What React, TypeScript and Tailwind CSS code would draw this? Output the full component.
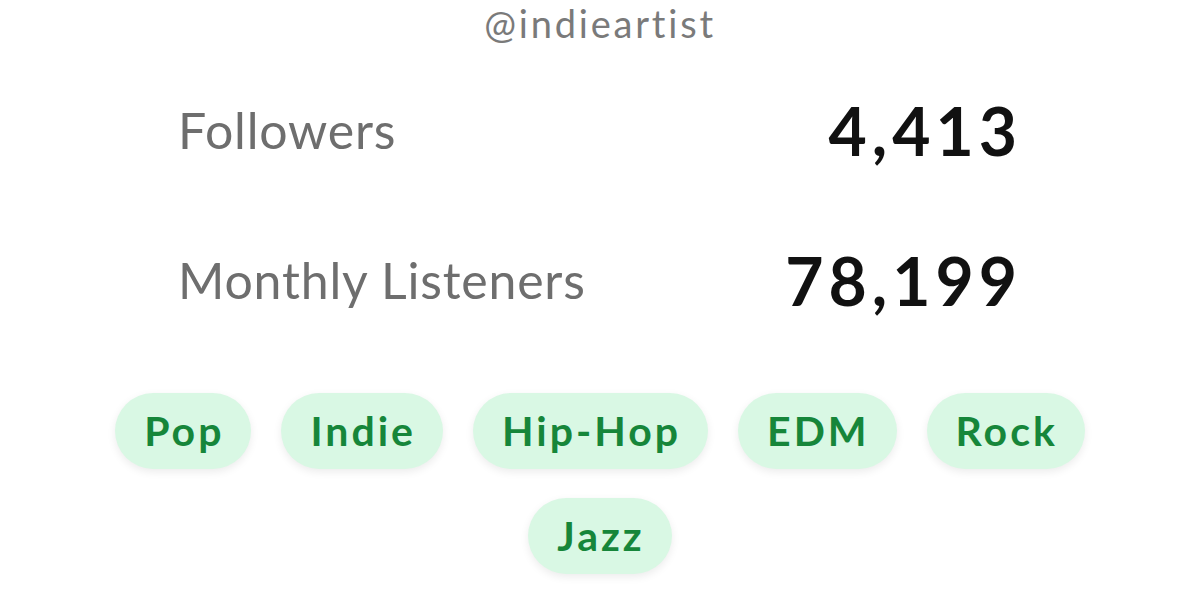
import React from "react";

const genres = ["Pop", "Indie", "Hip-Hop", "EDM", "Rock", "Jazz"];

export default function App() {
  return (
    <div
      className="w-[1200px] h-[600px] overflow-hidden bg-white flex flex-col items-center"
      style={{ fontFamily: "Lato, 'Noto Sans', sans-serif" }}
    >
      <div className="text-[38px] leading-[46px] tracking-[2.8px] text-[#7a7a7a] mt-[-2px] pt-[2px]">@indieartist</div>
      <div className="w-[839px] mt-[44px] flex flex-col gap-[70px] ml-[-5px]">
        <div className="flex items-center justify-between h-[80px]">
          <span className="text-[50px] tracking-[0.8px] text-[#6e6e6e]">Followers</span>
          <span className="text-[66px] font-bold tracking-[5px] mr-[-5px] text-[#111]">4,413</span>
        </div>
        <div className="flex items-center justify-between h-[80px]">
          <span className="text-[50px] tracking-[0.8px] text-[#6e6e6e]">Monthly Listeners</span>
          <span className="text-[66px] font-bold tracking-[5px] mr-[-5px] text-[#111]">78,199</span>
        </div>
      </div>
      <div className="mt-[73px] w-[1000px] flex flex-wrap justify-center gap-x-[30px] gap-y-[29px]">
        {genres.map((g) => (
          <span
            key={g}
            className="h-[76px] pl-[29px] pr-[27px] rounded-full bg-[#d9f8e4] text-[#16863a] font-bold text-[41px] tracking-[3px] flex items-center shadow-[0_3px_8px_rgba(0,0,0,0.08)]"
          >
            {g}
          </span>
        ))}
      </div>
    </div>
  );
}
